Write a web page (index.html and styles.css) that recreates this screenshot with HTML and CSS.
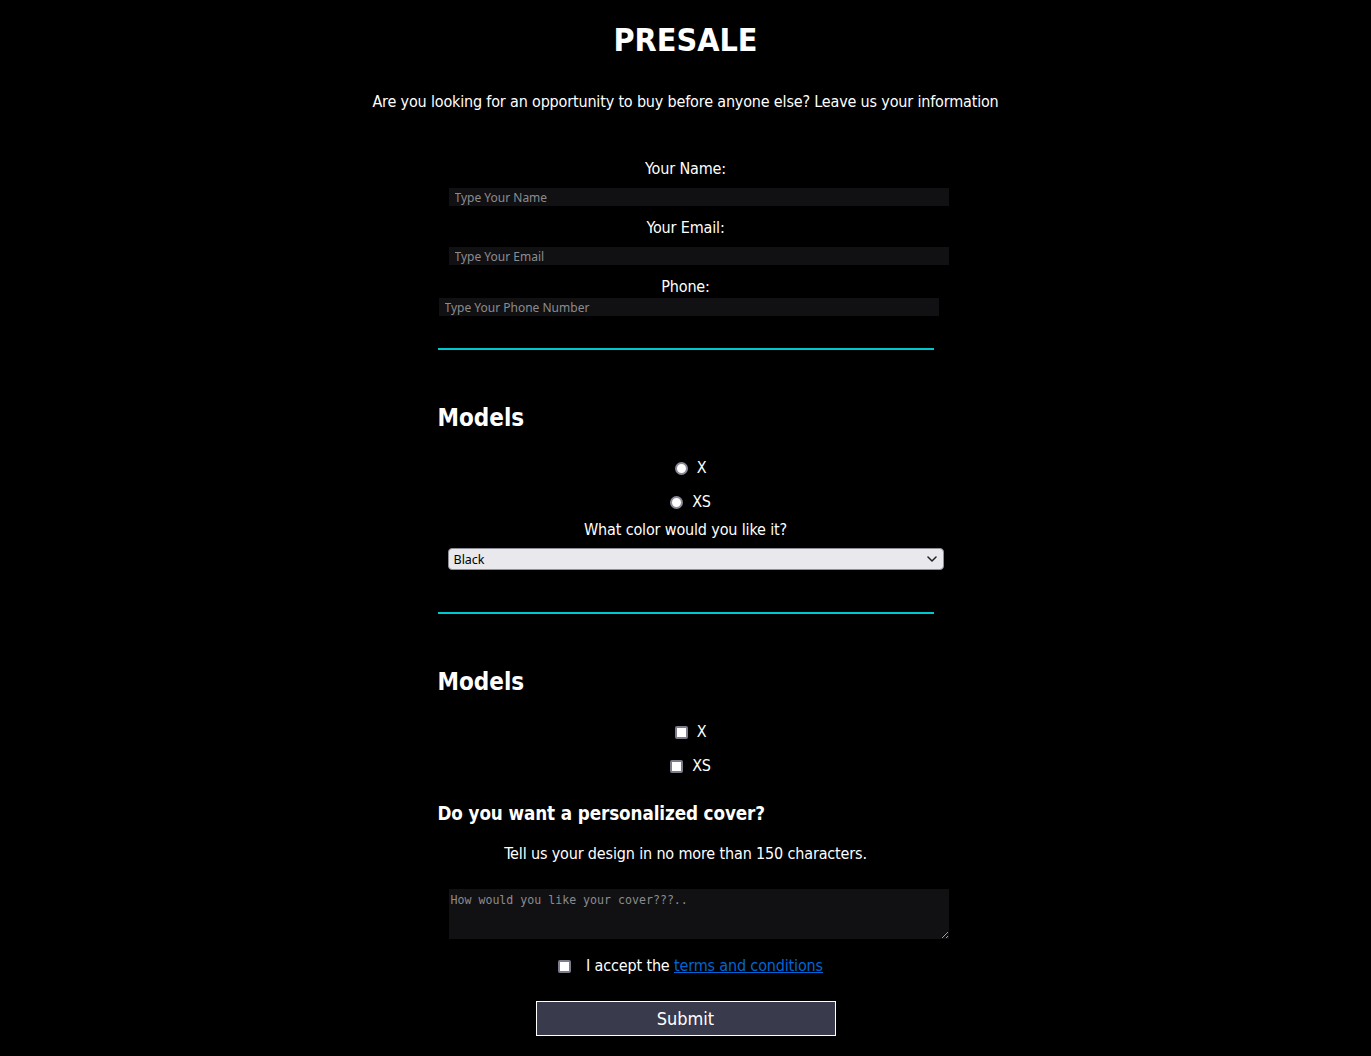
FILE: index.html
```html
<!DOCTYPE html>
<html lang="en">
<head>
<meta charset="utf-8">
<title>Presale</title>
<link rel="stylesheet" href="styles.css">
</head>
<body>
<header class="hero">
  <h1 class="title">PRESALE</h1>
  <p class="lead">Are you looking for an opportunity to buy before anyone else? Leave us your information</p>
</header>
<form class="form">
  <section class="contact">
    <label class="field-label" for="name">Your Name:</label>
    <input class="text-input indent" id="name" type="text" placeholder="Type Your Name">
    <label class="field-label" for="email">Your Email:</label>
    <input class="text-input indent" id="email" type="email" placeholder="Type Your Email">
    <label class="field-label tight" for="phone">Phone:</label>
    <input class="text-input" id="phone" type="tel" placeholder="Type Your Phone Number">
  </section>
  <hr class="divider">
  <section class="models">
    <h2 class="section-title">Models</h2>
    <div class="choice first"><input class="radio" type="radio" name="model" id="rx"><label for="rx">X</label></div>
    <div class="choice"><input class="radio" type="radio" name="model" id="rxs"><label for="rxs">XS</label></div>
    <label class="field-label color-label" for="color">What color would you like it?</label>
    <div class="select-wrap">
      <select class="select" id="color">
        <option>Black</option>
        <option>White</option>
      </select>
      <svg class="chevron" width="10" height="6" viewBox="0 0 10 6" aria-hidden="true"><path d="M1 1l4 4 4-4" fill="none" stroke="#222" stroke-width="1.5" stroke-linecap="round" stroke-linejoin="round"/></svg>
    </div>
  </section>
  <hr class="divider second">
  <section class="models">
    <h2 class="section-title">Models</h2>
    <div class="choice first"><input class="check" type="checkbox" id="cx"><label for="cx">X</label></div>
    <div class="choice"><input class="check" type="checkbox" id="cxs"><label for="cxs">XS</label></div>
    <h3 class="sub-title">Do you want a personalized cover?</h3>
    <p class="hint">Tell us your design in no more than 150 characters.</p>
    <textarea class="area" maxlength="150" placeholder="How would you like your cover???.."></textarea>
    <div class="terms"><input class="check" type="checkbox" id="terms"><label for="terms">I accept the <a href="#">terms and conditions</a></label></div>
    <button class="submit" type="button">Submit</button>
  </section>
</form>
</body>
</html>
```
FILE: styles.css
```css
html, body {
  margin: 0;
  padding: 0;
  background: #000;
}
body {
  color: #fff;
  font-family: "DejaVu Sans Condensed", "DejaVu Sans", sans-serif;
  font-size: 16px;
  letter-spacing: -0.15px;
}
.hero {
  text-align: center;
  padding-top: 21px;
}
.title {
  margin: 0;
  font-size: 32px;
  line-height: 38px;
  font-weight: bold;
  letter-spacing: 0;
}
.lead {
  margin: 33px 0 0;
  line-height: 20px;
  letter-spacing: -0.17px;
}
.form {
  width: 496px;
  margin: 47px auto 0;
  display: flex;
  flex-direction: column;
}
.contact, .models {
  display: flex;
  flex-direction: column;
}
.field-label {
  display: block;
  text-align: center;
  line-height: 20px;
  margin-bottom: 9px;
}
.field-label.tight {
  margin-bottom: 1px;
}
.text-input {
  width: 500px;
  height: 18px;
  box-sizing: border-box;
  background: #111114;
  border: none;
  outline: none;
  color: #ddd;
  font-family: "Noto Sans", sans-serif;
  font-size: 12px;
  letter-spacing: 0;
  padding: 0 6px;
  margin: 0 0 12px 1px;
}
.text-input.indent {
  margin-left: 11px;
  margin-bottom: 12px;
}
.text-input::placeholder, .area::placeholder {
  color: #8c8c8f;
}
.divider {
  width: 496px;
  margin: 20px 0 0;
  border: none;
  height: 2px;
  background: #00c8d0;
}
.divider.second {
  margin-top: 42px;
}
.section-title {
  margin: 53px 0 0;
  font-size: 24px;
  line-height: 30px;
  font-weight: bold;
  letter-spacing: 0;
}
.choice {
  display: flex;
  justify-content: center;
  align-items: center;
  padding-left: 10px;
  height: 20px;
  line-height: 20px;
}
.choice.first {
  margin-top: 25px;
}
.choice + .choice {
  margin-top: 14px;
}
.radio, .check {
  appearance: none;
  -webkit-appearance: none;
  box-sizing: border-box;
  width: 13px;
  height: 13px;
  margin: 0 9px 0 0;
  background: #fff;
  border: 2px solid #7c7c8a;
}
.radio {
  border-radius: 50%;
  border-color: #8a8a98;
}
.check {
  border-radius: 2px;
}
.color-label {
  margin: 8px 0 8px;
}
.select-wrap {
  position: relative;
  margin-left: 10px;
  width: 496px;
  height: 22px;
}
.select {
  appearance: none;
  -webkit-appearance: none;
  width: 100%;
  height: 100%;
  background: #e8e8ed;
  color: #000;
  border: 1px solid #8e8e96;
  border-radius: 4px;
  font-family: "Noto Sans", sans-serif;
  font-size: 12.5px;
  letter-spacing: 0;
  padding: 0 5px;
}
.chevron {
  position: absolute;
  right: 7px;
  top: 8px;
  pointer-events: none;
}
.sub-title {
  margin: 26px 0 0;
  font-size: 18.7px;
  line-height: 24px;
  font-weight: bold;
  letter-spacing: -0.1px;
}
.hint {
  margin: 18px 0 0;
  text-align: center;
  line-height: 20px;
}
.area {
  width: 500px;
  height: 50px;
  box-sizing: border-box;
  margin: 25px 0 0 11px;
  background: #111114;
  border: none;
  outline: none;
  color: #ddd;
  font-family: "DejaVu Sans Mono", monospace;
  font-size: 11.6px;
  letter-spacing: 0;
  padding: 4px 2px;
  resize: vertical;
}
.terms {
  display: flex;
  justify-content: center;
  align-items: center;
  padding-left: 10px;
  margin-top: 17px;
  line-height: 20px;
}
.terms .check {
  margin: 0 15px 0 0;
}
.terms a {
  color: #0066d6;
}
.submit {
  align-self: center;
  margin-top: 25px;
  width: 300px;
  height: 35px;
  background: #3a3a4d;
  color: #fff;
  border: 1px solid #fff;
  font-family: "DejaVu Sans Condensed", sans-serif;
  font-size: 18px;
}
```
